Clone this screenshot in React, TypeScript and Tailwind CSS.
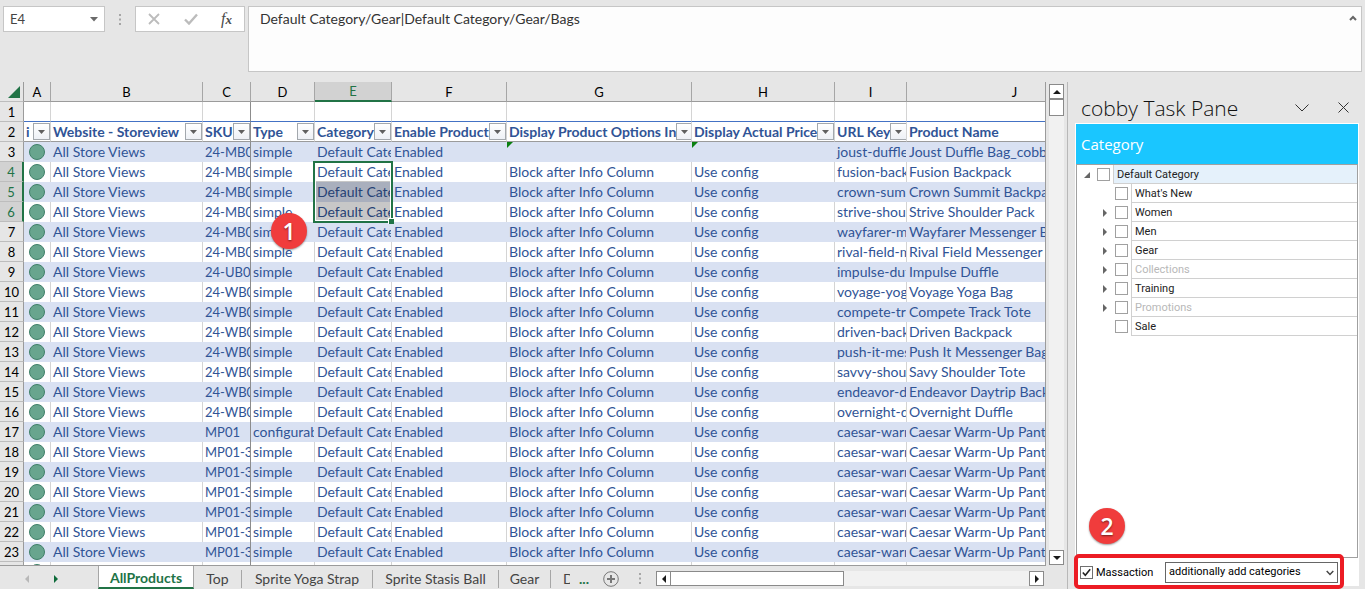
import type { ReactNode } from "react";

type Row = [sku: string, type: string, url: string, name: string];

const products: Row[] = [
  ["24-MB01", "simple", "joust-duffle-bag", "Joust Duffle Bag_cobby"],
  ["24-MB04", "simple", "fusion-backpack", "Fusion Backpack"],
  ["24-MB03", "simple", "crown-summit-backpack", "Crown Summit Backpack"],
  ["24-MB05", "simple", "strive-shoulder-pack", "Strive Shoulder Pack"],
  ["24-MB06", "simple", "wayfarer-messenger-bag", "Wayfarer Messenger Bag"],
  ["24-MB02", "simple", "rival-field-messenger", "Rival Field Messenger"],
  ["24-UB02", "simple", "impulse-duffle", "Impulse Duffle"],
  ["24-WB01", "simple", "voyage-yoga-bag", "Voyage Yoga Bag"],
  ["24-WB02", "simple", "compete-track-tote", "Compete Track Tote"],
  ["24-WB05", "simple", "driven-backpack", "Driven Backpack"],
  ["24-WB06", "simple", "push-it-messenger-bag", "Push It Messenger Bag"],
  ["24-WB03", "simple", "savvy-shoulder-tote", "Savy Shoulder Tote"],
  ["24-WB04", "simple", "endeavor-daytrip", "Endeavor Daytrip Backpack"],
  ["24-WB07", "simple", "overnight-duffle", "Overnight Duffle"],
  ["MP01", "configurable", "caesar-warm-up-pant", "Caesar Warm-Up Pant"],
  ["MP01-32", "simple", "caesar-warm-up-pant", "Caesar Warm-Up Pant-32"],
  ["MP01-32", "simple", "caesar-warm-up-pant", "Caesar Warm-Up Pant-32"],
  ["MP01-32", "simple", "caesar-warm-up-pant", "Caesar Warm-Up Pant-32"],
  ["MP01-33", "simple", "caesar-warm-up-pant", "Caesar Warm-Up Pant-33"],
  ["MP01-33", "simple", "caesar-warm-up-pant", "Caesar Warm-Up Pant-33"],
  ["MP01-33", "simple", "caesar-warm-up-pant", "Caesar Warm-Up Pant-33"],
  ["MP01-34", "simple", "caesar-warm-up-pant", "Caesar Warm-Up Pant-34"],
];

const columns = ["A", "B", "C", "D", "E", "F", "G", "H", "I", "J"];
const headings = ["i", "Website - Storeview", "SKU", "Type", "Category", "Enable Product", "Display Product Options In", "Display Actual Price", "URL Key", "Product Name"];

const categories = [
  { name: "What's New", open: false, muted: false },
  { name: "Women", open: true, muted: false },
  { name: "Men", open: true, muted: false },
  { name: "Gear", open: true, muted: false },
  { name: "Collections", open: true, muted: true },
  { name: "Training", open: true, muted: false },
  { name: "Promotions", open: true, muted: true },
  { name: "Sale", open: false, muted: false },
];

function FilterButton({ label }: { label: string }) {
  return (
    <button aria-label={`Filter ${label}`} className="ml-auto flex h-[17px] w-[17px] shrink-0 items-center justify-center border border-[#a3a8ad] bg-linear-to-b from-white to-[#eef1f6]">
      <svg width="7" height="4" viewBox="0 0 7 4"><path d="M0 0h7L3.5 4z" fill="#606060" /></svg>
    </button>
  );
}

function RowHead({ n }: { n: number }) {
  const on = n >= 4 && n <= 6;
  return (
    <th scope="row" className={`h-[20px] border-b border-b-[#bdbdbd] p-0 text-center text-[13px] font-normal ${on ? "border-r-2 border-r-[#217346] bg-[#d2d2d2] text-[#217346]" : "border-r border-r-[#9b9b9b] bg-[#e6e6e6] text-black"}`}>
      {n}
    </th>
  );
}

function Cell({ i, band, children }: { i: number; band: boolean; children?: ReactNode }) {
  const line = i === 2 ? "border-[#8c8c8c] text-[13px]" : band ? "border-[#d9e1f2]" : "border-[#d4d4d4]";
  return (
    <td className={`relative h-[20px] overflow-hidden border-r p-0 pl-[2px] whitespace-nowrap ${line} ${band ? "bg-[#d9e1f2]" : "bg-white"}`}>
      {children}
    </td>
  );
}

function Sheet() {
  return (
    <table className="w-[1123px] table-fixed border-separate border-spacing-0 text-[14px] leading-[18px] text-[#305496]">
      <colgroup>
        <col className="w-[24px]" />
        <col className="w-[27px]" />
        <col className="w-[152px]" />
        <col className="w-[48px]" />
        <col className="w-[64px]" />
        <col className="w-[77px]" />
        <col className="w-[115px]" />
        <col className="w-[185px]" />
        <col className="w-[143px]" />
        <col className="w-[72px]" />
        <col className="w-[216px]" />
      </colgroup>
      <thead>
        <tr>
          <th className="h-[20px] border-r border-b border-r-[#9b9b9b] border-b-[#bdbdbd] bg-[#e6e6e6] p-0">
            <svg className="ml-2" width="12" height="12" viewBox="0 0 12 12" aria-label="Select all"><path d="M12 0v12H0z" fill="#217346" /></svg>
          </th>
          {columns.map((c) => (
            <th key={c} scope="col" className={`h-[20px] border-r border-r-[#a6a6a6] p-0 text-center text-[13px] font-normal ${c === "E" ? "border-b-2 border-b-[#217346] bg-[#d2d2d2] text-[#217346]" : "border-b border-b-[#9b9b9b] bg-[#e6e6e6] text-black"}`}>
              {c}
            </th>
          ))}
        </tr>
      </thead>
      <tbody>
        <tr>
          <RowHead n={1} />
          {columns.map((c, i) => (
            <td key={c} className={`h-[20px] border-r border-b border-b-[#4472c4] bg-white p-0 ${i === 2 ? "border-r-[#8c8c8c]" : "border-r-[#d4d4d4]"}`} />
          ))}
        </tr>
        <tr>
          <RowHead n={2} />
          {headings.map((h, i) => (
            <td key={h} className={`h-[20px] border-r border-b border-b-[#9b9b9b] bg-white p-0 ${i === 2 ? "border-r-[#8c8c8c]" : "border-r-[#d4d4d4]"}`}>
              <div className="flex h-[19px] items-center overflow-hidden pl-[2px] font-bold whitespace-nowrap">
                <span>{h}</span>
                {i < 9 && <FilterButton label={h} />}
              </div>
            </td>
          ))}
        </tr>
        {products.map(([sku, type, url, name], r) => {
          const band = r % 2 === 0;
          return (
            <tr key={r}>
              <RowHead n={r + 3} />
              <Cell i={0} band={band}>
                <span className="ml-[3px] block h-[16px] w-[16px] rounded-full border border-[#3f8068] bg-[#68a58e]" />
              </Cell>
              <Cell i={1} band={band}>All Store Views</Cell>
              <Cell i={2} band={band}>{sku}</Cell>
              <Cell i={3} band={band}>{type}</Cell>
              <Cell i={4} band={band}>Default Category/Gear</Cell>
              <Cell i={5} band={band}>Enabled</Cell>
              <Cell i={6} band={band}>{r > 0 ? "Block after Info Column" : <ErrorMark />}</Cell>
              <Cell i={7} band={band}>{r > 0 ? "Use config" : <ErrorMark />}</Cell>
              <Cell i={8} band={band}>{url}</Cell>
              <Cell i={9} band={band}>{name}</Cell>
            </tr>
          );
        })}
      </tbody>
    </table>
  );
}

function ErrorMark() {
  return <svg className="absolute top-0 left-0" width="6" height="6" viewBox="0 0 6 6"><path d="M0 0h6L0 6z" fill="#0a8010" /></svg>;
}

function ScrollButton({ label, path }: { label: string; path: string }) {
  return (
    <button aria-label={label} className="flex h-[15px] w-[15px] shrink-0 items-center justify-center border border-[#8a8a8a] bg-white">
      <svg width="8" height="8" viewBox="0 0 8 8"><path d={path} fill="#1a1a1a" /></svg>
    </button>
  );
}

function Badge({ n }: { n: number }) {
  return (
    <span className="flex h-[36px] w-[36px] items-center justify-center rounded-full bg-[#f03c3c] font-['Open_Sans',sans-serif] text-[23px] leading-none font-semibold text-white shadow-[0_1px_2px_rgba(0,0,0,0.4)] [text-shadow:0_1px_2px_rgba(0,0,0,0.5)]">
      {n}
    </span>
  );
}

function FormulaBar() {
  return (
    <div className="flex h-[66px] shrink-0 items-start pr-[3px] pl-[3px] text-[14px]">
      <div className="flex h-[26px] w-[102px] items-center border border-[#c6c6c6] bg-white">
        <input aria-label="Name box" defaultValue="E4" className="h-full w-0 flex-1 bg-transparent pl-[6px] text-[13px] text-[#444] outline-none" />
        <svg className="mr-[6px]" width="8" height="5" viewBox="0 0 8 5"><path d="M0 0h8L4 4.6z" fill="#6a6a6a" /></svg>
      </div>
      <svg className="mt-[8px] ml-[14px]" width="2" height="11" viewBox="0 0 2 11"><path d="M0 0h2v2H0zM0 4.500h2v2H0zM0 9h2v2H0z" fill="#a6a6a6" /></svg>
      <div className="ml-[14px] flex h-[26px] w-[110px] items-center justify-between border border-[#c6c6c6] bg-white pr-[12px] pl-[12px]">
        <button aria-label="Cancel"><svg width="12" height="12" viewBox="0 0 12 12"><path d="M1 1l10 10M11 1L1 11" stroke="#bcbcbc" strokeWidth="1.800" fill="none" /></svg></button>
        <button aria-label="Enter"><svg width="14" height="12" viewBox="0 0 14 12"><path d="M1 6.500l4 4L13 1.500" stroke="#bcbcbc" strokeWidth="2.400" fill="none" /></svg></button>
        <button aria-label="Insert function" className="font-['Liberation_Serif',serif] text-[16px] leading-none text-[#4a4a4a] italic">f<span className="text-[13px] font-bold">x</span></button>
      </div>
      <div className="ml-[3px] flex h-[66px] flex-1 border border-[#c6c6c6] bg-[#fdfdfd]">
        <textarea aria-label="Formula" defaultValue="Default Category/Gear|Default Category/Gear/Bags" className="flex-1 resize-none bg-transparent pt-[2px] pl-[11px] leading-[20px] text-[#333] outline-none" />
        <button aria-label="Collapse formula bar" className="mt-[7px] mr-[4px] h-[8px]"><svg width="8" height="6" viewBox="0 0 8 6"><path d="M1 5l3-3 3 3" stroke="#666" strokeWidth="2" fill="none" /></svg></button>
      </div>
    </div>
  );
}

function SheetTabs() {
  const tab = "flex h-[18px] items-center justify-center border-r border-[#a6a6a6]";
  return (
    <div className="flex h-[23px] shrink-0 items-center pt-[2px] text-[14px] leading-[18px] text-[#444]">
      <button aria-label="Previous sheet" className="ml-[25px]"><svg width="4" height="8" viewBox="0 0 4 8"><path d="M4 0v8L0 4z" fill="#b8b8b8" /></svg></button>
      <button aria-label="Next sheet" className="ml-[25px]"><svg width="4" height="8" viewBox="0 0 4 8"><path d="M0 0v8l4-4z" fill="#0e6b3a" /></svg></button>
      <button className="-mt-[3px] ml-[40px] h-[24px] w-[96px] self-start border-r border-b-2 border-l border-r-[#a6a6a6] border-b-[#217346] border-l-[#a6a6a6] bg-white pt-[3px] font-bold text-[#217346]">AllProducts</button>
      <button className={`${tab} w-[48px]`}>Top</button>
      <button className={`${tab} w-[131px]`}>Sprite Yoga Strap</button>
      <button className={`${tab} w-[126px]`}>Sprite Stasis Ball</button>
      <button className={`${tab} w-[52px]`}>Gear</button>
      <button className="ml-[12px] w-[7px] overflow-hidden text-left">D</button>
      <button className="ml-[9px] font-bold text-[#217346]">...</button>
      <button aria-label="New sheet" className="ml-[14px]">
        <svg width="16" height="16" viewBox="0 0 16 16" fill="none"><circle cx="8" cy="8" r="7.300" stroke="#777" /><path d="M8 4v8M4 8h8" stroke="#777" strokeWidth="2" /></svg>
      </button>
      <svg className="ml-[20px]" width="2" height="11" viewBox="0 0 2 11"><path d="M0 0h2v2H0zM0 4.500h2v2H0zM0 9h2v2H0z" fill="#a6a6a6" /></svg>
      <div className="mr-[2px] ml-auto flex w-[388px] bg-[#f1f1f1]">
        <ScrollButton label="Scroll left" path="M6 0v8L2 4z" />
        <div className="h-[15px] w-[173px] border border-l-0 border-[#8a8a8a] bg-white" />
        <div className="flex-1" />
        <ScrollButton label="Scroll right" path="M2 0v8l4-4z" />
      </div>
    </div>
  );
}

function TreeBox({ label }: { label: string }) {
  return <input type="checkbox" aria-label={label} className="h-[13px] w-[13px] shrink-0 appearance-none border border-[#a0a0a0] bg-white" />;
}

function TaskPane() {
  return (
    <aside className="flex w-[297px] shrink-0 flex-col pr-[6px] pb-[3px] pl-[7px] font-[Roboto,sans-serif] text-[11px] text-[#222]">
      <header className="flex h-[41px] shrink-0 items-center pt-[10px] pl-[6px]">
        <h1 className="font-['Open_Sans',sans-serif] text-[21px] leading-[26px] font-light text-[#111]">cobby Task Pane</h1>
        <button aria-label="Pane options" className="ml-auto"><svg width="14" height="8" viewBox="0 0 14 8"><path d="M.5.5L7 7 13.500.5" stroke="#333" fill="none" /></svg></button>
        <button aria-label="Close pane" className="mr-[10px] ml-[29px]"><svg width="11" height="11" viewBox="0 0 11 11"><path d="M.5.5l10 10M10.500.5l-10 10" stroke="#333" fill="none" /></svg></button>
      </header>
      <section className="relative flex flex-1 flex-col border border-b-0 border-white bg-white">
        <h2 className="flex h-[40px] items-center bg-[#1ac6ff] pl-[5px] font-['Open_Sans',sans-serif] text-[15px] text-white">Category</h2>
        <div className="flex-1 border border-[#a0a0a0] bg-white">
          <div className="flex h-[19px] items-center">
            <button aria-label="Collapse Default Category" className="ml-[7px]"><svg width="6" height="6" viewBox="0 0 6 6"><path d="M6 0v6H0z" fill="#666" /></svg></button>
            <span className="ml-[7px] flex"><TreeBox label="Default Category" /></span>
            <span className="ml-[3px] flex h-[19px] flex-1 items-center border-b border-l border-[#d0d0d0] bg-[#e5f1fb] pt-[2px] pl-[3px]">Default Category</span>
          </div>
          {categories.map((c) => (
            <div key={c.name} className="flex h-[19px] items-center">
              <span className="flex w-[38px] shrink-0 pl-[26px]">
                {c.open && <button aria-label={`Expand ${c.name}`}><svg width="4" height="8" viewBox="0 0 4 8"><path d="M0 0v8l4-4z" fill="#666" /></svg></button>}
              </span>
              <TreeBox label={c.name} />
              <span className={`ml-[3px] flex h-[19px] flex-1 items-center border-b border-l border-[#d0d0d0] pt-[2px] pl-[3px] ${c.muted ? "text-[#b8b8b8]" : ""}`}>{c.name}</span>
            </div>
          ))}
        </div>
        <div className="flex h-[28px] items-center pr-[20px] pl-[4px] text-black">
          <span className="relative flex">
            <input id="mass" type="checkbox" defaultChecked className="h-[13px] w-[13px] appearance-none border border-[#707070] bg-white" />
            <svg className="pointer-events-none absolute top-[2px] left-[2px]" width="9" height="9" viewBox="0 0 9 9"><path d="M.8 4.500l2.500 2.700L8.200 1.200" stroke="#222" strokeWidth="1.600" fill="none" /></svg>
          </span>
          <label htmlFor="mass" className="ml-[3px] pt-[2px]">Massaction</label>
          <span className="relative ml-auto flex">
            <select aria-label="Mass action mode" className="h-[21px] w-[173px] appearance-none border border-[#666] bg-white pt-px pl-[3px]">
              <option>additionally add categories</option>
            </select>
            <svg className="pointer-events-none absolute top-[8px] right-[4px]" width="8" height="6" viewBox="0 0 8 6"><path d="M.7 1L4 4.400 7.300 1" stroke="#444" strokeWidth="1.500" fill="none" /></svg>
          </span>
        </div>
        <div className="pointer-events-none absolute right-[14px] bottom-[-3px] left-[-2px] h-[35px] rounded-[5px] border-4 border-[#ec1c24]" />
        <div className="absolute bottom-[42px] left-[13px]"><Badge n={2} /></div>
      </section>
    </aside>
  );
}

export default function App() {
  return (
    <div className="flex h-screen flex-col overflow-hidden bg-[#e6e6e6] pt-[6px] font-[Lato,sans-serif]">
      <FormulaBar />
      <div className="mt-[10px] flex min-h-0 flex-1">
        <main className="flex min-w-0 flex-1 flex-col">
          <div className="flex min-h-0 flex-1">
            <div className="relative min-w-0 flex-1 overflow-hidden border-r border-b border-[#9b9b9b]">
              <Sheet />
              <div className="pointer-events-none absolute top-[79px] left-[313px] h-[62px] w-[80px] border-2 border-[#217346]">
                <div className="flex h-full flex-col border border-white pt-[17px]"><div className="flex-1 bg-black/22" /></div>
                <div className="absolute right-[-3px] bottom-[-3px] h-[6px] w-[6px] border-t border-l border-white bg-[#217346]" />
              </div>
              <div className="absolute top-[131px] left-[271px]"><Badge n={1} /></div>
            </div>
            <div className="mt-[2px] mr-[3px] mb-px ml-[3px] flex w-[15px] flex-col bg-[#f1f1f1]">
              <ScrollButton label="Scroll up" path="M0 6h8L4 2z" />
              <div className="h-[17px] border border-[#8a8a8a] bg-white" />
              <div className="flex-1" />
              <ScrollButton label="Scroll down" path="M0 2h8L4 6z" />
            </div>
          </div>
          <div className="pr-[21px]"><SheetTabs /></div>
        </main>
        <div className="w-px shrink-0 bg-[#b8b8b8]" />
        <TaskPane />
      </div>
    </div>
  );
}
